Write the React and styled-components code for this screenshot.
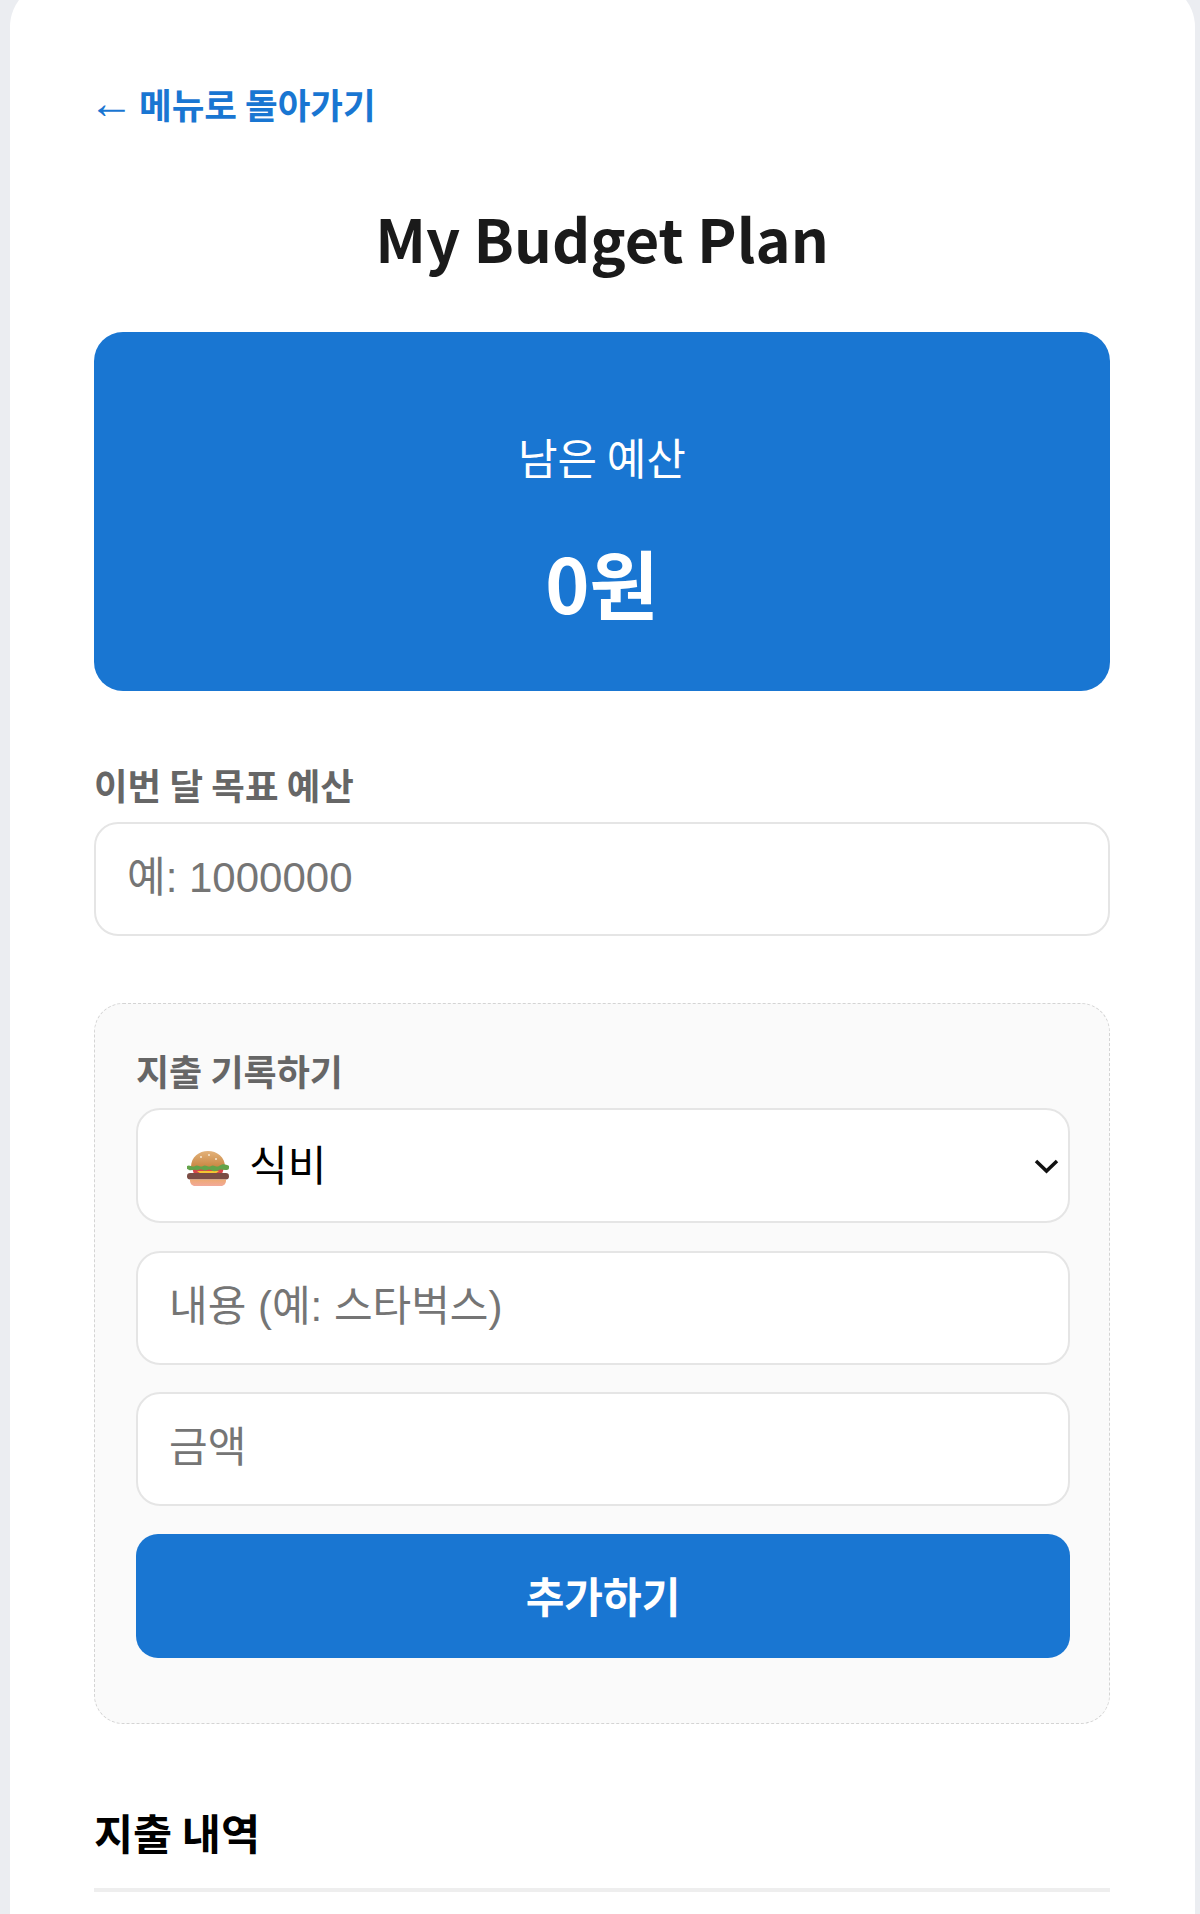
import React from 'react';
import styled, { createGlobalStyle } from 'styled-components';

const GlobalStyle = createGlobalStyle`
  html, body {
    margin: 0;
    height: 100%;
    overflow: hidden;
    background: #ebedf1;
  }
  body {
    font-family: 'Noto Sans CJK KR', 'Noto Sans', sans-serif;
  }
`;

const Card = styled.main`
  box-sizing: border-box;
  min-height: 1960px;
  margin: -18px 5px 0 10px;
  padding: 102px 85px 0 84px;
  background: #fff;
  border-radius: 45px 45px 0 0;
`;

const BackLink = styled.a`
  display: flex;
  align-items: center;
  gap: 5px;
  height: 40px;
  color: #1976d2;
  font-size: 35.500px;
  font-weight: 700;
  line-height: 40px;
  text-decoration: none;
`;

const Arrow = styled.span`
  margin-left: -5px;
  padding-bottom: 2px;
  font-family: 'Liberation Sans', sans-serif;
  font-size: 45px;
  font-weight: 400;
  line-height: 40px;
`;

const Title = styled.h1`
  margin: 78px 0 0;
  color: #1a1a1a;
  font-size: 59.500px;
  font-weight: 700;
  line-height: 70px;
  text-align: center;
`;

const BalanceCard = styled.section`
  margin-top: 60px;
  padding: 99px 0 64px;
  border-radius: 29px;
  background: #1976d2;
  color: #fff;
  text-align: center;
`;

const BalanceLabel = styled.div`
  font-size: 43px;
  line-height: 50px;
`;

const BalanceAmount = styled.div`
  margin-top: 56px;
  font-size: 75px;
  font-weight: 700;
  line-height: 90px;
`;

const FieldLabel = styled.label`
  display: block;
  margin-top: ${p => p.$top}px;
  color: #666;
  font-size: ${p => p.$size}px;
  font-weight: 700;
  line-height: 44px;
`;

const TextInput = styled.input`
  display: block;
  box-sizing: border-box;
  width: 100%;
  height: 114px;
  margin-top: ${p => p.$top || 0}px;
  padding: 0 31px 2px;
  border: 2px solid #e5e5e5;
  border-radius: 24px;
  background: #fff;
  font-family: 'Liberation Sans', 'Noto Sans CJK KR', sans-serif;
  font-size: 42px;

  &::placeholder {
    color: #757575;
    opacity: 1;
  }
`;

const ExpenseForm = styled.form`
  margin-top: 67px;
  padding: 44px 39px 65px 41px;
  border: 1px dashed #d4d4d4;
  border-radius: 29px;
  background: #fafafa;
`;

const FormFields = styled.div`
  display: flex;
  flex-direction: column;
  gap: 27.500px;
  margin-top: 16px;
`;

const SelectBox = styled.div`
  display: flex;
  align-items: center;
  box-sizing: border-box;
  height: 115px;
  padding: 0 9px 0 49px;
  border: 2px solid #e5e5e5;
  border-radius: 24px;
  background: #fff;
  color: #000;
  font-family: 'Liberation Sans', 'Noto Sans CJK KR', sans-serif;
  font-size: 42px;
`;

const BurgerIcon = styled.svg`
  margin-top: 6px;
`;

const SelectText = styled.span`
  margin-left: 20px;
  padding-bottom: 7px;
`;

const Chevron = styled.svg`
  margin-left: auto;
`;

const SubmitButton = styled.button`
  height: 124px;
  padding: 0 0 3px;
  border: 0;
  border-radius: 22px;
  background: #1976d2;
  color: #fff;
  font-family: inherit;
  font-size: 42px;
  font-weight: 700;
`;

const SectionTitle = styled.h2`
  margin: 83px 0 0;
  padding-bottom: 31px;
  border-bottom: 4px solid #eee;
  color: #000;
  font-size: 42.500px;
  font-weight: 700;
  line-height: 50px;
`;

const Burger = () => (
  <BurgerIcon width="42" height="35" viewBox="0 0 42 35" aria-hidden="true">
    <defs>
      <linearGradient id="bun-top" x1="0" y1="0" x2="0" y2="1">
        <stop offset="0" stopColor="#e3b27a" />
        <stop offset="1" stopColor="#c98743" />
      </linearGradient>
      <linearGradient id="bun-bottom" x1="0" y1="0" x2="0" y2="1">
        <stop offset="0" stopColor="#eeaa72" />
        <stop offset="1" stopColor="#f2a99a" />
      </linearGradient>
    </defs>
    <path d="M4 16C4 6 12 0 21 0s17 6 17 16z" fill="url(#bun-top)" />
    <circle cx="14" cy="6" r="1" fill="#f7e9d2" />
    <circle cx="22" cy="4" r="1" fill="#f7e9d2" />
    <circle cx="29" cy="8" r="1" fill="#f7e9d2" />
    <path d="M5 17h32l-2 6H7z" fill="#d9474a" />
    <path d="M10 20h22l-4 3H14z" fill="#f5c431" />
    <path d="M0 15c3-2 5 2 8 0s5 2 8 0 5 2 8 0 5 2 8 0 5-2 8-1 2 1 2 3-2 2-4 2-4-1-6 0-5 2-8 0-5 2-8 0-5 1-7 0-5 1-7 0-3-1-3-2z" fill="#63a34a" />
    <rect x="0" y="22" width="42" height="6.500" rx="3.200" fill="#7b4d45" />
    <path d="M3 28.500h36v1c0 3-2 5.500-5 5.500H8c-3 0-5-2.500-5-5.500z" fill="url(#bun-bottom)" />
  </BurgerIcon>
);

const App = () => (
  <>
    <GlobalStyle />
    <Card>
      <BackLink href="#">
        <Arrow>←</Arrow>
        <span>메뉴로 돌아가기</span>
      </BackLink>
      <Title>My Budget Plan</Title>
      <BalanceCard>
        <BalanceLabel>남은 예산</BalanceLabel>
        <BalanceAmount>0원</BalanceAmount>
      </BalanceCard>
      <FieldLabel $top={72} $size={36.5}>이번 달 목표 예산</FieldLabel>
      <TextInput $top={15} type="number" placeholder="예: 1000000" />
      <ExpenseForm>
        <FieldLabel $top={0} $size={36}>지출 기록하기</FieldLabel>
        <FormFields>
          <SelectBox>
            <Burger />
            <SelectText>식비</SelectText>
            <Chevron width="25" height="16" viewBox="0 0 25 16" aria-hidden="true">
              <path d="M2 3l10.500 10L23 3" fill="none" stroke="#111" strokeWidth="3.500" />
            </Chevron>
          </SelectBox>
          <TextInput type="text" placeholder="내용 (예: 스타벅스)" />
          <TextInput type="number" placeholder="금액" />
          <SubmitButton type="button">추가하기</SubmitButton>
        </FormFields>
      </ExpenseForm>
      <SectionTitle>지출 내역</SectionTitle>
    </Card>
  </>
);

export default App;
